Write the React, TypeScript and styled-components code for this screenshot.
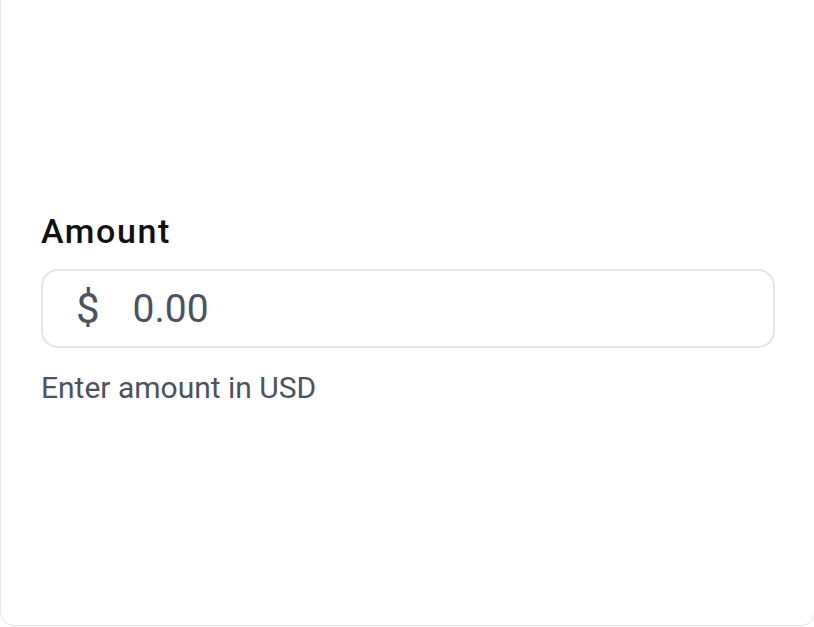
import { useState } from 'react';
import styled, { createGlobalStyle } from 'styled-components';

const GlobalStyle = createGlobalStyle`
  html, body {
    margin: 0;
    padding: 0;
    background: #ffffff;
  }
  body {
    font-family: 'Roboto', 'Open Sans', sans-serif;
  }
`;

const Card = styled.div`
  box-sizing: border-box;
  width: 815px;
  height: 626px;
  border: 1px solid #e6e6e6;
  border-top: none;
  border-radius: 0 0 14px 14px;
  padding: 209px 40px 0 40px;
  display: flex;
  flex-direction: column;
`;

const Label = styled.label`
  font-size: 34px;
  font-weight: 500;
  letter-spacing: 1.6px;
  color: #111111;
  line-height: 44px;
  margin-bottom: 16px;
`;

const InputBox = styled.div`
  box-sizing: border-box;
  height: 79px;
  width: 734px;
  border: 2px solid #e5e5e5;
  border-radius: 17px;
  display: flex;
  align-items: center;
  padding-left: 33px;
  gap: 33px;
`;

const Prefix = styled.span`
  font-size: 42px;
  color: #4b5260;
  line-height: 1;
`;

const Input = styled.input`
  flex: 1;
  border: none;
  outline: none;
  background: transparent;
  font-family: inherit;
  font-size: 39px;
  color: #4b5260;
  padding: 0;

  &::placeholder {
    color: #4b5260;
    opacity: 1;
  }
`;

const Helper = styled.div`
  margin-top: 22px;
  font-size: 30px;
  color: #4b5260;
  line-height: 36px;
`;

const App = () => {
  const [amount, setAmount] = useState('');

  return (
    <>
      <GlobalStyle />
      <Card>
        <Label htmlFor="amount">Amount</Label>
        <InputBox>
          <Prefix>$</Prefix>
          <Input
            id="amount"
            type="text"
            placeholder="0.00"
            value={amount}
            onChange={(e) => setAmount(e.target.value)}
          />
        </InputBox>
        <Helper>Enter amount in USD</Helper>
      </Card>
    </>
  );
};

export default App;
